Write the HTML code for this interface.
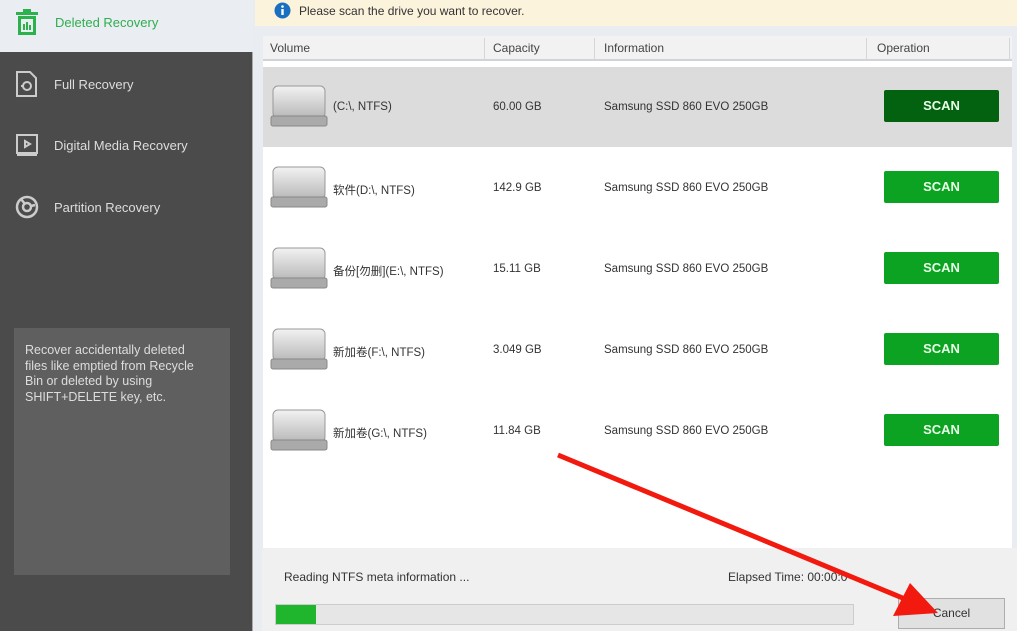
<!DOCTYPE html>
<html><head><meta charset="utf-8"><style>
*{margin:0;padding:0;box-sizing:border-box}
body{width:1017px;height:631px;overflow:hidden;position:relative;background:#e9ecf0;font-family:"Liberation Sans","Noto Sans CJK SC",sans-serif;font-size:12px;color:#333}
.abs{position:absolute}
.side{left:0;top:52px;width:253px;height:579px;background:#4b4b4b;border-right:1px solid #aaa}
.top{left:0;top:0;width:253px;height:52px;background:#eaedf2}
.nav{color:#ddd;font-size:13px}
.info{left:14px;top:328px;width:216px;height:247px;background:#5f5f5f;color:#ddd;font-size:12.5px;line-height:15.5px;padding:15px 11px;white-space:nowrap}
.banner{left:255px;top:0;width:762px;height:26px;background:#fcf3dc;font-size:12px;color:#333}
.table{left:263px;top:36px;width:749px;height:512px;background:#fff}
.hdr{left:0;top:0;width:749px;height:25px;background:#f2f2f2;border-bottom:2px solid #d0d3d8;font-size:12px;color:#444}
.hdr span{position:absolute;top:5px}
.sep{position:absolute;top:2px;width:1px;height:22px;background:#d6d6d6}
.row{position:absolute;left:0;width:749px;height:80px;font-size:11.5px;color:#333}
.row span{position:absolute;top:34px}
.btn{position:absolute;left:621px;top:23px;width:115px;height:32px;background:#0ba321;color:#e8ffe8;font-weight:bold;font-size:13px;text-align:center;line-height:32px;border-radius:2px}
.disk{position:absolute;left:7px;top:17px;width:58px;height:46px}
.bottom{left:262px;top:548px;width:755px;height:83px;background:#f0f0f0}
</style></head><body>
<div class="abs top"></div>
<svg class="abs" style="left:15px;top:9px" width="24" height="27" viewBox="0 0 24 27"><rect x="1" y="3" width="22" height="3" fill="#2bb24c"/><rect x="8" y="0" width="8" height="4" fill="#2bb24c"/><rect x="3" y="7" width="18" height="19" fill="#2bb24c"/><rect x="6" y="10" width="12" height="13" fill="#eaedf2"/><rect x="8" y="15" width="2" height="6" fill="#2bb24c"/><rect x="11" y="13" width="2" height="8" fill="#2bb24c"/><rect x="14" y="16" width="2" height="5" fill="#2bb24c"/></svg>
<div class="abs" style="left:55px;top:15px;color:#2fae4e;font-size:13px">Deleted Recovery</div>
<div class="abs side"></div>
<svg class="abs" style="left:15px;top:70px" width="24" height="28" viewBox="0 0 24 28" fill="none" stroke="#ccc" stroke-width="2"><path d="M2 2h13l6 6v18H2z"/><circle cx="12" cy="16" r="4"/><path d="M6 16h3"/></svg>
<div class="abs nav" style="left:54px;top:77px">Full Recovery</div>
<svg class="abs" style="left:15px;top:133px" width="24" height="24" viewBox="0 0 24 24" fill="none" stroke="#ccc" stroke-width="2"><rect x="2" y="2" width="20" height="18"/><path d="M2 22h20"/><path d="M10 8l5 3-5 3z"/></svg>
<div class="abs nav" style="left:54px;top:138px">Digital Media Recovery</div>
<svg class="abs" style="left:14px;top:194px" width="26" height="26" viewBox="0 0 26 26" fill="none" stroke="#ccc" stroke-width="2.5"><circle cx="13" cy="13" r="10"/><circle cx="13" cy="13" r="4"/><path d="M7 5l4 5M21 11l-4 1"/></svg>
<div class="abs nav" style="left:54px;top:200px">Partition Recovery</div>
<div class="abs info">Recover accidentally deleted<br>files like emptied from Recycle<br>Bin or deleted by using<br>SHIFT+DELETE key, etc.</div>

<div class="abs banner"><svg class="abs" style="left:19px;top:2px" width="17" height="17"><circle cx="8.5" cy="8.5" r="8" fill="#1a6fc0"/><rect x="7.3" y="7" width="2.4" height="6" fill="#fff"/><circle cx="8.5" cy="4.5" r="1.3" fill="#fff"/></svg><span class="abs" style="left:44px;top:4px">Please scan the drive you want to recover.</span></div>

<div class="abs table">
<div class="abs hdr"><span style="left:7px">Volume</span><div class="sep" style="left:221px"></div><span style="left:230px">Capacity</span><div class="sep" style="left:331px"></div><span style="left:341px">Information</span><div class="sep" style="left:603px"></div><span style="left:614px">Operation</span><div class="sep" style="left:746px"></div></div>
<div class="row" style="top:31px;background:#dcdcdc"><svg class="disk"><defs><linearGradient id="g" x1="0" y1="0" x2="0" y2="1"><stop offset="0" stop-color="#f2f2f2"/><stop offset="1" stop-color="#b8b8b8"/></linearGradient></defs><rect x="3" y="2" width="52" height="32" rx="5" fill="url(#g)" stroke="#999"/><rect x="1" y="32" width="56" height="10" rx="2" fill="#aaa" stroke="#888"/></svg><span style="left:70px">(C:\, NTFS)</span><span style="left:230px">60.00 GB</span><span style="left:341px">Samsung SSD 860 EVO 250GB</span><div class="btn" style="background:#03620f">SCAN</div></div>
<div class="row" style="top:112px"><svg class="disk"><rect x="3" y="2" width="52" height="32" rx="5" fill="url(#g)" stroke="#999"/><rect x="1" y="32" width="56" height="10" rx="2" fill="#aaa" stroke="#888"/></svg><span style="left:70px">软件(D:\, NTFS)</span><span style="left:230px">142.9 GB</span><span style="left:341px">Samsung SSD 860 EVO 250GB</span><div class="btn">SCAN</div></div>
<div class="row" style="top:193px"><svg class="disk"><rect x="3" y="2" width="52" height="32" rx="5" fill="url(#g)" stroke="#999"/><rect x="1" y="32" width="56" height="10" rx="2" fill="#aaa" stroke="#888"/></svg><span style="left:70px">备份[勿删](E:\, NTFS)</span><span style="left:230px">15.11 GB</span><span style="left:341px">Samsung SSD 860 EVO 250GB</span><div class="btn">SCAN</div></div>
<div class="row" style="top:274px"><svg class="disk"><rect x="3" y="2" width="52" height="32" rx="5" fill="url(#g)" stroke="#999"/><rect x="1" y="32" width="56" height="10" rx="2" fill="#aaa" stroke="#888"/></svg><span style="left:70px">新加卷(F:\, NTFS)</span><span style="left:230px">3.049 GB</span><span style="left:341px">Samsung SSD 860 EVO 250GB</span><div class="btn">SCAN</div></div>
<div class="row" style="top:355px"><svg class="disk"><rect x="3" y="2" width="52" height="32" rx="5" fill="url(#g)" stroke="#999"/><rect x="1" y="32" width="56" height="10" rx="2" fill="#aaa" stroke="#888"/></svg><span style="left:70px">新加卷(G:\, NTFS)</span><span style="left:230px">11.84 GB</span><span style="left:341px">Samsung SSD 860 EVO 250GB</span><div class="btn">SCAN</div></div>
</div>

<div class="abs bottom">
<span class="abs" style="left:22px;top:22px;font-size:12px">Reading NTFS meta information ...</span>
<span class="abs" style="left:466px;top:22px;font-size:12px">Elapsed Time: 00:00:0</span>
<div class="abs" style="left:13px;top:56px;width:579px;height:21px;background:#e6e6e6;border:1px solid #ccc"><div style="width:40px;height:19px;background:#1fb52d"></div></div>
<div class="abs" style="left:636px;top:50px;width:107px;height:31px;background:#e1e1e1;border:1px solid #adadad;text-align:center;line-height:29px;font-size:12px">Cancel</div>
</div>
<svg class="abs" style="left:0;top:0" width="1017" height="631"><line x1="558" y1="455" x2="905" y2="599" stroke="#f21a0f" stroke-width="5"/><polygon points="938,613 893,616 910,583" fill="#f21a0f"/></svg>
</body></html>
